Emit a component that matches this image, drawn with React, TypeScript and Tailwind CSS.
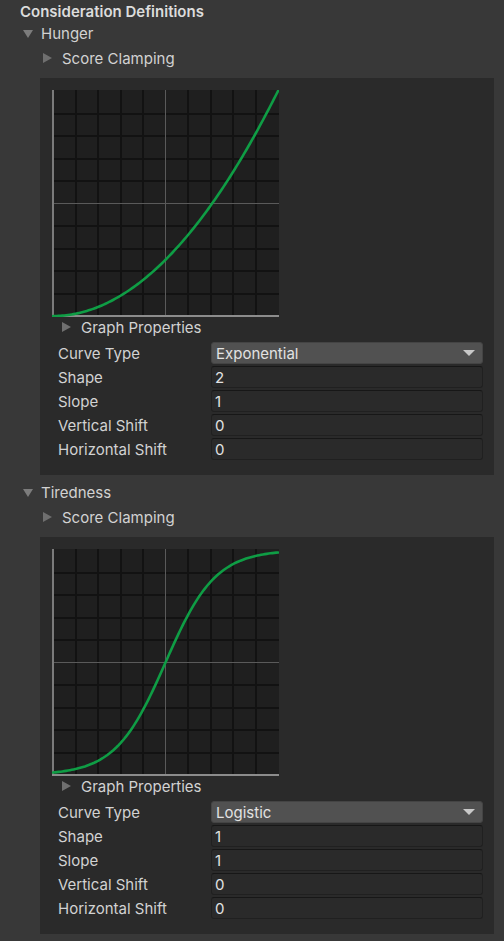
import React from 'react';

type CurveKind = 'exponential' | 'logistic';

interface Consideration {
  name: string;
  curveType: string;
  kind: CurveKind;
  shape: string;
  slope: string;
  verticalShift: string;
  horizontalShift: string;
}

const considerations: Consideration[] = [
  { name: 'Hunger', curveType: 'Exponential', kind: 'exponential', shape: '2', slope: '1', verticalShift: '0', horizontalShift: '0' },
  { name: 'Tiredness', curveType: 'Logistic', kind: 'logistic', shape: '1', slope: '1', verticalShift: '0', horizontalShift: '0' },
];

const SIZE = 225;

function curvePath(kind: CurveKind) {
  const pts: string[] = [];
  for (let i = 0; i <= 120; i++) {
    const x = i / 120;
    const y = kind === 'exponential' ? x * x : 1 / (1 + Math.exp(-9 * (x - 0.5)));
    pts.push(`${(1 + x * SIZE).toFixed(2)},${(226 - y * SIZE).toFixed(2)}`);
  }
  return 'M' + pts.join(' L');
}

function DownTriangle() {
  return (
    <svg width="10" height="8" viewBox="0 0 10 8">
      <path d="M0 0 L10 0 L5 8 Z" fill="#7c7c7c" />
    </svg>
  );
}

function RightTriangle() {
  return (
    <svg width="9" height="10" viewBox="0 0 9 10">
      <path d="M0 0 L9 5 L0 10 Z" fill="#6f6f6f" />
    </svg>
  );
}

function Graph({ kind }: { kind: CurveKind }) {
  const ticks = [1, 2, 3, 4, 6, 7, 8, 9];
  return (
    <svg width="227" height="227" viewBox="0 0 227 227" className="block">
      <rect x="0" y="0" width="227" height="227" fill="#1f1f1f" />
      {ticks.map((i) => (
        <React.Fragment key={i}>
          <rect x={Math.round(1 + i * 22.5) - 1} y="0" width="2" height="226" fill="#121212" />
          <rect x="0" y={Math.round(226 - i * 22.5) - 1} width="227" height="2" fill="#121212" />
        </React.Fragment>
      ))}
      <rect x="113" y="0" width="1" height="226" fill="#5a5a5a" />
      <rect x="0" y="113" width="227" height="1" fill="#5a5a5a" />
      <rect x="0" y="0" width="2" height="227" fill="#7b7b7b" />
      <rect x="0" y="225" width="227" height="2" fill="#8c8c8c" />
      <path d={curvePath(kind)} fill="none" stroke="#0f9d45" strokeWidth="2.6" strokeLinecap="round" />
    </svg>
  );
}

function Field({ label, value, dropdown }: { label: string; value: string; dropdown?: boolean }) {
  return (
    <div className="flex h-[22px] items-center">
      <span className="w-[153px] shrink-0">{label}</span>
      {dropdown ? (
        <div className="flex h-full flex-1 items-center justify-between rounded-[3px] border border-[#444] bg-[#515151] pl-[4px] pr-[7px] text-[#e2e2e2]">
          <span>{value}</span>
          <svg width="12" height="6" viewBox="0 0 12 6">
            <path d="M0 0 L12 0 L6 6 Z" fill="#c8c8c8" />
          </svg>
        </div>
      ) : (
        <div className="flex h-full flex-1 items-center rounded-[3px] border border-[#202020] border-t-[#171717] bg-[#2a2a2a] pl-[3px] text-[#e2e2e2]">
          {value}
        </div>
      )}
    </div>
  );
}

function Section({ c, first }: { c: Consideration; first: boolean }) {
  return (
    <div className={first ? '' : 'pt-[7px]'}>
      <div className="flex h-[21px] items-center pl-[23px]">
        <DownTriangle />
        <span className="ml-[8px]">{c.name}</span>
      </div>
      <div className="flex h-[28px] items-center pl-[43px]">
        <RightTriangle />
        <span className="ml-[10px]">Score Clamping</span>
      </div>
      <div className="ml-[40px] mt-[6px] w-[454px] bg-[#2a2a2a] pb-[15px] pt-[12px]">
        <div className="pl-[12px]">
          <Graph kind={c.kind} />
        </div>
        <div className="flex h-[20px] items-center pl-[22px]">
          <RightTriangle />
          <span className="ml-[10px]">Graph Properties</span>
        </div>
        <div className="mt-[5px] flex flex-col gap-[2px] pl-[18px] pr-[11px]">
          <Field label="Curve Type" value={c.curveType} dropdown />
          <Field label="Shape" value={c.shape} />
          <Field label="Slope" value={c.slope} />
          <Field label="Vertical Shift" value={c.verticalShift} />
          <Field label="Horizontal Shift" value={c.horizontalShift} />
        </div>
      </div>
    </div>
  );
}

export default function App() {
  return (
    <div className="min-h-screen w-full bg-[#383838] font-['Inter',sans-serif] text-[15px] leading-none text-[#d2d2d2]">
      <div className="flex h-[23px] items-center pl-[20px] font-semibold text-[#dcdcdc]">Consideration Definitions</div>
      {considerations.map((c, i) => (
        <Section key={c.name} c={c} first={i === 0} />
      ))}
    </div>
  );
}
